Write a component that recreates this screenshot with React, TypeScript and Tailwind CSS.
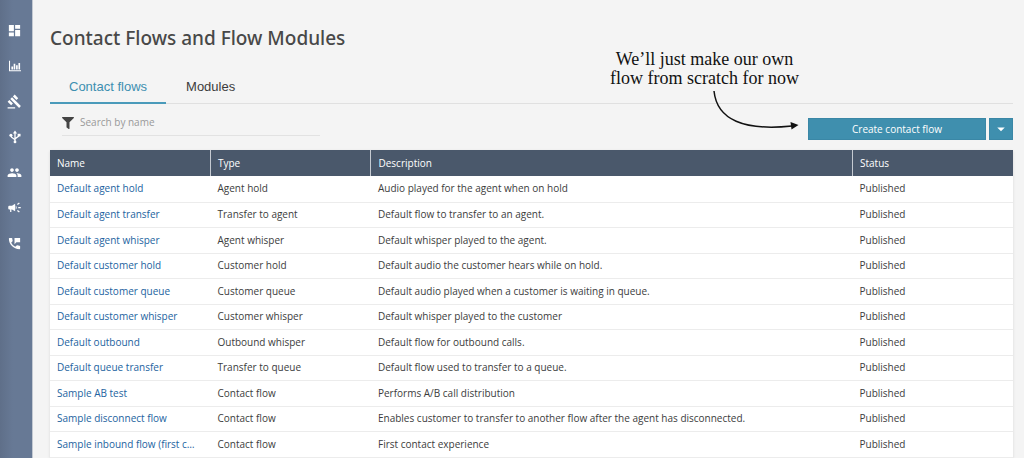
import { useState } from "react";
import { MdArrowDropDown, MdCampaign, MdDashboard, MdGavel, MdPeople, MdPermPhoneMsg } from "react-icons/md";
import { FaFilter } from "react-icons/fa";

const flows = [
  { name: "Default agent hold", type: "Agent hold", description: "Audio played for the agent when on hold" },
  { name: "Default agent transfer", type: "Transfer to agent", description: "Default flow to transfer to an agent." },
  { name: "Default agent whisper", type: "Agent whisper", description: "Default whisper played to the agent." },
  { name: "Default customer hold", type: "Customer hold", description: "Default audio the customer hears while on hold." },
  { name: "Default customer queue", type: "Customer queue", description: "Default audio played when a customer is waiting in queue." },
  { name: "Default customer whisper", type: "Customer whisper", description: "Default whisper played to the customer" },
  { name: "Default outbound", type: "Outbound whisper", description: "Default flow for outbound calls." },
  { name: "Default queue transfer", type: "Transfer to queue", description: "Default flow used to transfer to a queue." },
  { name: "Sample AB test", type: "Contact flow", description: "Performs A/B call distribution" },
  { name: "Sample disconnect flow", type: "Contact flow", description: "Enables customer to transfer to another flow after the agent has disconnected." },
  { name: "Sample inbound flow (first c…", type: "Contact flow", description: "First contact experience" },
];

function BarChartIcon() {
  return (
    <svg className="h-3 w-3" viewBox="0 0 16 16" fill="currentColor">
      <path d="M0 1h1.4v12.8H16V15H0z" />
      <path d="M3.2 8.500h2.200v4.100H3.200zM6.200 5h2.200v7.600H6.200zM9.400 7h2.200v5.600H9.400zM12.600 4h2.200v8.600h-2.200z" />
    </svg>
  );
}

function RoutingIcon() {
  return (
    <svg className="h-[14px] w-[14px]" viewBox="0 0 24 24" fill="none" stroke="currentColor" strokeWidth="2.2">
      <path d="M12 4v17M12 17.5c0-3-7-3-7-8M12 16c0-3 7-3 7-8" />
      <path d="M12 1l3.6 5H8.400z" fill="currentColor" stroke="none" />
      <circle cx="5" cy="9" r="2.600" fill="currentColor" stroke="none" />
      <circle cx="12" cy="20.500" r="2.400" fill="currentColor" stroke="none" />
      <path d="M16.500 6.500h5v4.500h-5z" fill="currentColor" stroke="none" />
    </svg>
  );
}

const navItems = [
  { label: "Dashboard", icon: <MdDashboard className="h-[15px] w-[15px]" /> },
  { label: "Metrics", icon: <BarChartIcon /> },
  { label: "Rules", icon: <MdGavel className="h-[15px] w-[15px]" /> },
  { label: "Routing", icon: <RoutingIcon /> },
  { label: "Users", icon: <MdPeople className="h-[15px] w-[15px]" /> },
  { label: "Campaigns", icon: <MdCampaign className="h-[15px] w-[15px]" /> },
  { label: "Phone", icon: <MdPermPhoneMsg className="h-[15px] w-[15px]" /> },
];

const tabs = ["Contact flows", "Modules"];

export default function ContactFlows() {
  const [tab, setTab] = useState("Contact flows");
  const [search, setSearch] = useState("");

  const rows = flows.filter((flow) => flow.name.toLowerCase().includes(search.toLowerCase()));

  return (
    <div className="flex min-h-screen bg-[#f4f4f4] font-['Open_Sans','Noto_Sans',sans-serif] text-[#3c3c3c]">
      <nav className="w-[33px] shrink-0 border-r border-[#c3c9d2] bg-linear-to-r from-[#5f6f89] to-[#677995] to-40% pt-3">
        <ul>
          {navItems.map((item) => (
            <li key={item.label} className="h-9 even:h-[35px]">
              <a href="#" aria-label={item.label} className="flex h-full items-center justify-center pr-[3px] text-white">
                {item.icon}
              </a>
            </li>
          ))}
        </ul>
      </nav>

      <main className="min-w-0 flex-1 pt-6 pr-[11px] pl-[17px]">
        <h1 className="font-['Noto_Sans',sans-serif] text-[19px] leading-7 font-medium text-[#484848]">Contact Flows and Flow Modules</h1>

        <div className="relative mt-4">
          <div role="tablist" className="flex gap-px border-b border-[#e0e0e0] font-['Liberation_Sans',sans-serif] text-[13px]">
            {tabs.map((name) => (
              <button
                key={name}
                role="tab"
                aria-selected={tab === name}
                onClick={() => setTab(name)}
                className={`-mb-px h-9 border-b-2 px-[19px] pt-1 ${tab === name ? "border-[#4a9aba] text-[#3d8fb0]" : "border-transparent"}`}
              >
                {name}
              </button>
            ))}
          </div>

          <div className="absolute right-[214px] bottom-4 text-center font-['Liberation_Serif',serif] text-lg leading-[19px] text-[#111]">
            <p>We’ll just make our own</p>
            <p>flow from scratch for now</p>
          </div>
          <svg className="absolute top-[22px] right-[213px] h-12 w-24" viewBox="0 0 96 48" fill="none">
            <path d="M10 1C13 30 40 41 88 36" stroke="#111" strokeWidth="1.5" />
            <path d="M86.500 32l8 3-7 4.500z" fill="#111" />
          </svg>
        </div>

        <div className="flex items-start justify-between pt-[6px]">
          <label className="ml-3 flex h-[26px] w-[258px] items-center gap-[6px] border-b border-[#e2e2e2]">
            <FaFilter className="h-3 w-3 text-[#444]" />
            <input
              type="text"
              aria-label="Search by name"
              placeholder="Search by name"
              value={search}
              onChange={(e) => setSearch(e.target.value)}
              className="min-w-0 flex-1 text-[10px] outline-none placeholder:text-[#999]"
            />
          </label>
          <div className="mt-2 flex gap-[3px] text-white">
            <button className="h-[22px] w-[178px] border border-[#3a87a6] bg-[#3f8fae] text-[10px] font-medium">Create contact flow</button>
            <button aria-label="More options" className="flex h-[22px] w-6 items-center justify-center border border-[#3a87a6] bg-[#3f8fae]">
              <MdArrowDropDown className="h-[18px] w-[18px] shrink-0" />
            </button>
          </div>
        </div>

        <table className="mt-[10px] w-full table-fixed bg-white text-left text-[10px] font-medium shadow-sm">
          <thead>
            <tr className="h-[26px] bg-[#4a586b] text-white">
              <th className="w-1/6 px-[7px] font-medium">Name</th>
              <th className="w-1/6 border-l border-[#c5cad1] px-[7px] font-medium">Type</th>
              <th className="w-1/2 border-l border-[#c5cad1] px-[7px] font-medium">Description</th>
              <th className="w-1/6 border-l border-[#c5cad1] px-[7px] font-medium">Status</th>
            </tr>
          </thead>
          <tbody>
            {rows.map((flow) => (
              <tr key={flow.name} className="h-[26px] border-b border-[#ececec] even:h-[25px]">
                <td className="truncate px-[7px]">
                  <a href="#" className="text-[#2363a0]">{flow.name}</a>
                </td>
                <td className="px-[7px]">{flow.type}</td>
                <td className="px-[7px]">{flow.description}</td>
                <td className="px-[7px]">Published</td>
              </tr>
            ))}
          </tbody>
        </table>
      </main>
    </div>
  );
}
